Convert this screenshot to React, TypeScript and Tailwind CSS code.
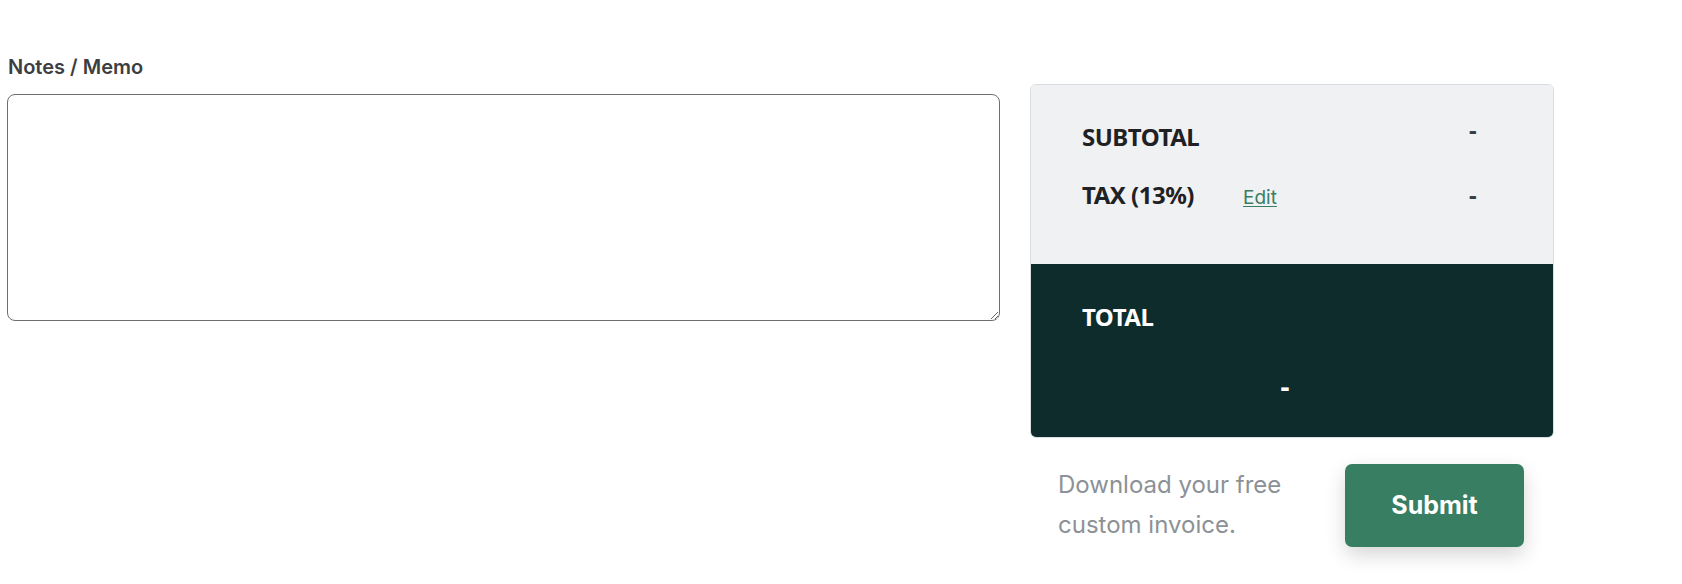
import { useState } from 'react';

export default function App() {
    const [notes, setNotes] = useState('');

    return (
        <div className="w-[1682px] h-[584px] bg-white font-['Inter',sans-serif]">
            <div className="flex pt-[53px] pl-[7px]">
                {/* notes */}
                <div className="w-[993px]">
                    <label className="block pl-[1px] mb-[13px] text-[20px] leading-[28px] font-semibold text-[#3d3e42]">
                        Notes / Memo
                    </label>
                    <textarea
                        value={notes}
                        onChange={(e) => setNotes(e.target.value)}
                        className="block w-[993px] h-[227px] rounded-[8px] border-[1.5px] border-[#6e6e6e] bg-white p-3 text-[18px] outline-none"
                    />
                </div>

                {/* totals */}
                <div className="ml-[30px] mt-[31px] w-[524px]">
                    <div className="overflow-hidden rounded-[6px] border border-[#dadde1] font-['Noto_Sans',sans-serif]">
                        <div className="h-[179px] bg-[#f0f1f3] pt-[36px] pl-[51px] flex flex-col gap-[26px]">
                            <div className="flex items-baseline leading-[32px]">
                                <span className="w-[387px] text-[24px] tracking-[-0.5px] font-bold text-[#1f2124]">SUBTOTAL</span>
                                <span className="text-[24px] font-bold text-[#3c3d40] -translate-y-[7px]">-</span>
                            </div>
                            <div className="flex items-baseline leading-[32px]">
                                <span className="w-[161px] text-[24px] tracking-[-0.5px] font-bold text-[#1f2124]">TAX (13%)</span>
                                <a href="#" className="w-[226px] font-['Inter',sans-serif] text-[19px] text-[#3a7d62] underline underline-offset-2">
                                    Edit
                                </a>
                                <span className="text-[24px] font-bold text-[#3c3d40]">-</span>
                            </div>
                        </div>
                        <div className="h-[173px] bg-[#0f2c2d] pt-[37px]">
                            <div className="pl-[51px] text-[24px] tracking-[-0.5px] leading-[32px] font-bold text-white">TOTAL</div>
                            <div className="mt-[35px] flex justify-center pr-[14px] text-[28px] leading-[36px] font-bold text-white">-</div>
                        </div>
                    </div>

                    <div className="mt-[26px] flex items-start pl-[28px]">
                        <p className="w-[260px] mt-[1px] text-[24px] leading-[40px] text-[#8c9196]">
                            Download your free custom invoice.
                        </p>
                        <button className="ml-[27px] w-[179px] h-[83px] rounded-[7px] bg-[#377e62] text-[25px] font-bold text-white shadow-[0_8px_20px_rgba(0,0,0,0.16)]">
                            Submit
                        </button>
                    </div>
                </div>
            </div>
        </div>
    );
}
